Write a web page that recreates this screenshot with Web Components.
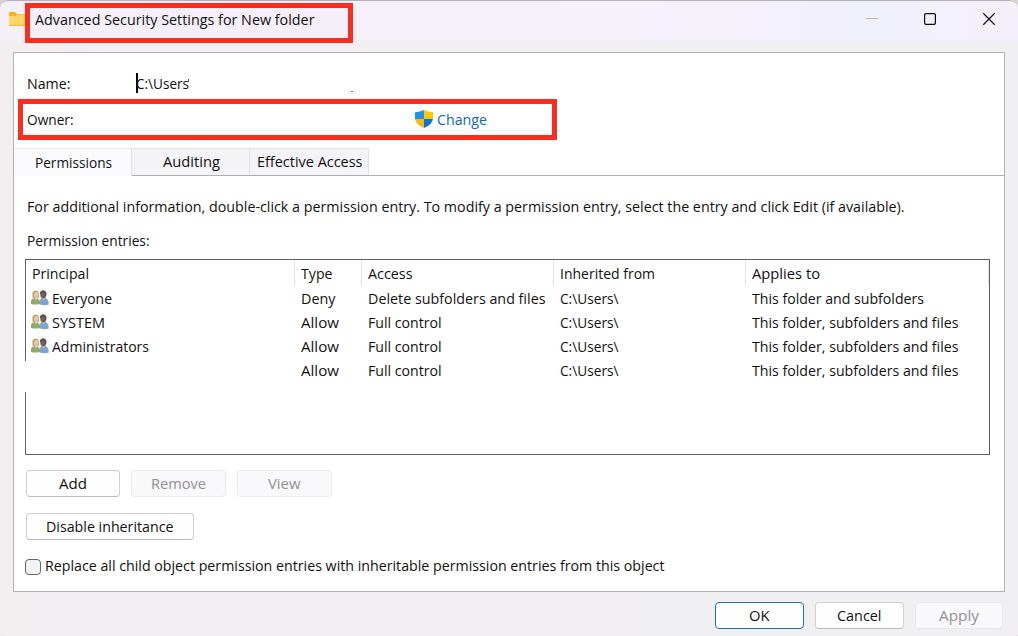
<!DOCTYPE html>
<html lang="en">
<head>
<meta charset="utf-8">
<title>Advanced Security Settings for New folder</title>
<style>
html,body{margin:0;height:100%;overflow:hidden}
body{background:#d9d3cf;font-family:"Open Sans","Noto Sans",sans-serif;font-size:14.8px;line-height:24px;color:#111}
</style>
</head>
<body>
<security-dialog></security-dialog>
<script>
const define = (name, html, setup) => {
  const t = document.createElement('template');
  t.innerHTML = html;
  customElements.define(name, class extends HTMLElement {
    connectedCallback() {
      if (this.shadowRoot) return;
      this.attachShadow({mode: 'open'}).append(t.content.cloneNode(true));
      if (setup) setup(this, this.shadowRoot);
    }
  });
};

// A single line label, condensed to the width in "w".
define('ui-label', `<style>:host{display:block;white-space:pre;flex:none;height:24px;line-height:22px}span{display:inline-block;transform-origin:0 50%}</style><span><slot></slot></span>`,
  (el, root) => {
    const span = root.querySelector('span'), w = +el.getAttribute('w');
    if (!w) return;
    const k = w / span.getBoundingClientRect().width;
    span.style.transform = `scaleX(${k})`;
    el.style.width = w + 'px';
  });

define('folder-icon', `<style>:host{display:block;width:19px;height:16px}svg{display:block}</style>
<svg width="19" height="16" viewBox="0 0 19 16"><path d="M1 1Q1 0 2 0H7L9 2H18V8H1Z" fill="#f6b21c"/><path d="M1 4H7.500L9 2.600H19V14H2Q1 14 1 13Z" fill="#ffd768"/><path d="M1 12.700H19V14H2Q1 14 1 13Z" fill="#f2bb3e"/></svg>`);

define('shield-icon', `<style>:host{display:block;width:18px;height:18px;flex:none}svg{display:block}</style>
<svg width="18" height="18" viewBox="0 0 18 18"><defs><clipPath id="s"><path d="M9 0Q12.500 2 18 2.200V8.500Q17.700 14.300 9 18Q.3 14.300 0 8.500V2.200Q5.500 2 9 0Z"/></clipPath></defs><g clip-path="url(#s)"><path fill="#1994e8" d="M0 0H9V9H0Z"/><path fill="#ffc800" d="M9 0H18V9H9Z"/><path fill="#fdb913" d="M0 9H9V18H0Z"/><path fill="#0879cd" d="M9 9H18V18H9Z"/></g></svg>`);

define('users-icon', `<style>:host{display:block;width:18px;height:16px;flex:none}svg{display:block}</style>
<svg width="18" height="16" viewBox="0 0 18 16">
<path d="M9 14.500V10Q9.500 7.500 12 7.500Q17 8 17.600 12V14.800Q13 15.700 9 14.500Z" fill="#7ba5d4"/>
<path d="M10.500 7.500L12.500 10L14 7.500Z" fill="#c2d8ee"/>
<ellipse cx="12.300" cy="4.500" rx="3" ry="3.900" fill="#7b5d54"/>
<path d="M9 4Q8.500 .6 12 .5Q15.800 .6 15.400 5L14.500 6Q14.400 3.500 12.700 3.200Q10.500 3.500 9 4Z" fill="#5a5357"/>
<path d="M0 14V11Q.5 8.500 4 8Q8.800 8.400 9 12V14Q4.500 15.200 0 14Z" fill="#8fa966"/>
<path d="M1.500 7.500Q.5 .6 4.700 .5Q8.900 .6 8 7.500Q5 9.800 1.500 7.500Z" fill="#b8a068"/>
<ellipse cx="5.300" cy="4.900" rx="2.200" ry="3.100" fill="#e5c8a5"/>
<path d="M3.500 8L5.300 10.500L7 8Z" fill="#e5c8a5"/></svg>`);

define('caption-controls', `<style>:host{display:block;width:132px;height:16px}svg{display:block}</style>
<svg width="132" height="16" viewBox="0 0 132 16" fill="none"><path d="M0 6.500H12" stroke="#bdbcc6"/><rect x="58.600" y="1.600" width="10.800" height="10.800" rx="1.300" stroke="#0c0c14" stroke-width="1.250"/><path d="M117.300 1.300L128.700 12.700M128.700 1.300L117.300 12.700" stroke="#15151d" stroke-width="1.250"/></svg>`);

define('title-bar', `<style>
:host{display:flex;height:40px;box-sizing:border-box;border-top:1px solid #b5b0b8;background:linear-gradient(90deg,#f5effa 0%,#f6f0fb 60%,#f1f1fb 85%,#f4f0fb);border-radius:8px 8px 0 0;padding-left:8px;position:relative}
folder-icon{margin-top:11px}
.mark{position:absolute;left:25px;top:2px;width:328px;height:40px;box-sizing:border-box;border:5px solid #fb2d1e;padding:0 0 0 5px;background:#f5effa}
caption-controls{margin:11px 20px 0 auto}
</style><folder-icon></folder-icon><div class="mark"><slot></slot></div><caption-controls></caption-controls>`);

define('ui-button', `<style>
:host{display:flex;box-sizing:border-box;height:27px;border:1px solid #d0ced1;border-bottom-color:#bcbabd;border-radius:4px;background:#fefefe;align-items:center;justify-content:center;color:#111}
:host([disabled]){background:#f9f8fa;border-color:#ebe9ec;color:#929095}
:host([primary]){border-color:#1b70b3}
</style><slot></slot>`);

define('ui-tab', `<style>
:host{display:flex;box-sizing:border-box;height:27px;justify-content:center;border:1px solid #e3e1e4;border-left:0;border-bottom:0;background:#f4f3f5;padding:1px 0 0 1px}
:host([selected]){height:28px;background:#faf9fc;border-color:#ece9ee;border-right-color:#dfdde1;padding-top:2px}
</style><slot></slot>`);

define('entries-table', `<style>
:host{display:block;box-sizing:border-box;width:965px;height:196px;border:1px solid #636065;position:relative}
.row{display:grid;grid-template-columns:269px 67px 192px 192px 1fr;height:24px}
.head{height:26px}
.head>div{border-right:1px solid #e5e3e6;padding-top:2px;height:24px}
.row>div{display:flex;padding-left:6px}
.row:not(.head)>div{padding-top:1px}
.row:not(.head)>div:first-child{padding-left:5px;gap:3px}
users-icon{margin-top:3px}
.gap{position:absolute;left:-1px;top:101px;width:1px;height:31px;background:#fff}
</style><div class="row head"><div><ui-label w="57">Principal</ui-label></div><div><ui-label w="31.500">Type</ui-label></div><div><ui-label w="44.500">Access</ui-label></div><div><ui-label w="95">Inherited from</ui-label></div><div><ui-label w="68">Applies to</ui-label></div></div><div class="body"></div><div class="gap"></div>`,
(el, root) => {
  const sub = ['This folder, subfolders and files', 206.5];
  const rows = [
    [['Everyone', 60], ['Deny', 34.5], ['Delete subfolders and files', 177.5], ['This folder and subfolders', 172]],
    [['SYSTEM', 53], ['Allow', 38], ['Full control', 73.5], sub],
    [['Administrators', 97], ['Allow', 38], ['Full control', 73.5], sub],
    [null, ['Allow', 38], ['Full control', 73.5], sub]
  ];
  const label = ([t, w]) => `<ui-label w="${w}">${t}</ui-label>`;
  root.querySelector('.body').innerHTML = rows.map(([p, t, a, s]) =>
    `<div class="row"><div>${p ? '<users-icon></users-icon>' + label(p) : ''}</div><div>${label(t)}</div><div>${label(a)}</div><div>${label(['C:\\Users\\', 58.5])}</div><div>${label(s)}</div></div>`).join('');
});

define('owner-row', `<style>
:host{display:flex;box-sizing:border-box;width:539px;height:41px;border:5px solid #fb2d1e;padding:4px 0 0 4px;background:#fff}
.v{margin-left:341.500px;display:flex;color:#1766b4}
shield-icon{margin:2px 4px 0 0}
</style><ui-label w="46.500">Owner:</ui-label><div class="v"><shield-icon></shield-icon><ui-label w="50">Change</ui-label></div>`);

define('ui-checkbox', `<style>
:host{display:flex;gap:4px;height:24px}
i{box-sizing:border-box;width:16px;height:16px;border:1px solid #68666b;border-radius:4px;background:#f3f2f4;margin-top:5px}
</style><i></i><slot></slot>`);

define('security-dialog', `<style>
:host{display:flex;flex-direction:column;width:1018px;height:636px;background:linear-gradient(90deg,#f3eef0,#f1eff2 10%,#f0eff2);border-radius:8px 8px 2px 2px;overflow:hidden}
title-bar{flex:none}
.panel{box-sizing:border-box;width:992px;height:540px;margin:12px 0 0 13px;border:1px solid #b4b1b5;background:#fff;display:flex;flex-direction:column;flex:none}
.name{display:flex;height:46px;padding:19px 0 0 13px;box-sizing:border-box}
.caret{width:2px;height:20px;background:#000;margin:1px -2px 0 65.500px}
.tick{width:1px;height:3px;background:#555;margin:7px 0 0 -1px}
.dot{width:2px;height:1px;background:#777;margin:19px 0 0 162px}
owner-row{margin-left:4px}
.tabs{display:flex;height:28px;margin-top:8px;flex:none}
.line{flex:1}
.tabs ui-tab:not([selected]),.line{box-shadow:0 1px #b1aeb2}
.line{height:27px}
.page{padding:19px 0 0 11px;display:flex;flex-direction:column}
.page>ui-label{margin-left:2px}
.page>ui-label+ui-label{margin-top:10px}
entries-table{margin-top:6px}
.buttons{display:flex;gap:11px;margin:15px 0 0 1px}
.foot{display:flex;justify-content:flex-end;gap:11px;margin:10px 15px 0 0}
</style>
<title-bar><ui-label w="279.500">Advanced Security Settings for New folder</ui-label></title-bar>
<div class="panel">
<div class="name"><ui-label w="43.500">Name:</ui-label><div class="caret"></div><ui-label w="53">C:\\Users</ui-label><div class="tick"></div><div class="dot"></div></div>
<owner-row></owner-row>
<div class="tabs"><ui-tab selected style="width:118px"><ui-label w="77">Permissions</ui-label></ui-tab><ui-tab style="width:118px"><ui-label w="57">Auditing</ui-label></ui-tab><ui-tab style="width:119px"><ui-label w="105.500">Effective Access</ui-label></ui-tab><div class="line"></div></div>
<div class="page">
<ui-label w="877.500">For additional information, double-click a permission entry. To modify a permission entry, select the entry and click Edit (if available).</ui-label>
<ui-label w="122.500">Permission entries:</ui-label>
<entries-table></entries-table>
<div class="buttons"><ui-button style="width:94px"><ui-label w="28">Add</ui-label></ui-button><ui-button disabled style="width:95px"><ui-label w="55">Remove</ui-label></ui-button><ui-button disabled style="width:95px"><ui-label w="32.500">View</ui-label></ui-button></div>
<div class="buttons" style="margin-top:16px"><ui-button style="width:168px"><ui-label w="127.500">Disable inheritance</ui-label></ui-button></div>
<ui-checkbox style="margin-top:14px"><ui-label w="619.500">Replace all child object permission entries with inheritable permission entries from this object</ui-label></ui-checkbox>
</div></div>
<div class="foot"><ui-button primary style="width:89px"><ui-label w="20.500">OK</ui-label></ui-button><ui-button style="width:89px"><ui-label w="44.500">Cancel</ui-label></ui-button><ui-button disabled style="width:88px"><ui-label w="40">Apply</ui-label></ui-button></div>`);
</script>
</body>
</html>
